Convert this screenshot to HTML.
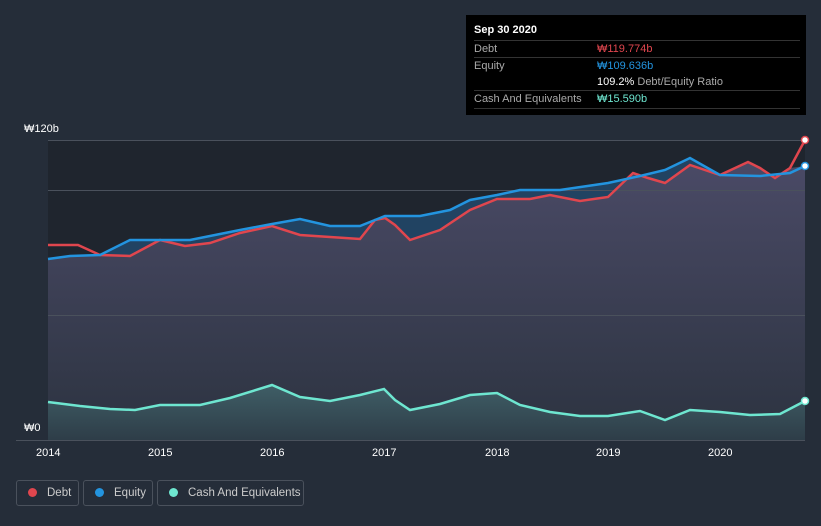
<!DOCTYPE html>
<html><head><style>
html,body{margin:0;width:821px;height:526px;overflow:hidden}
body{background:#252d39;font-family:"Liberation Sans","Noto Sans CJK KR",sans-serif;position:relative}
.t{position:absolute;color:#fff;font-size:11px}
.tip{position:absolute;left:466px;top:15px;width:340px;height:100px;background:#000;}
.row{position:absolute;left:8px;width:326px;border-top:1px solid #333;font-size:11px;color:#aaa;height:17px;line-height:17px}
.leg{position:absolute;top:480px;height:26px;border:1px solid #4a515c;border-radius:3px;color:#ccc;font-size:11.5px;line-height:25px;box-sizing:border-box;white-space:nowrap}
.dot{display:inline-block;width:9px;height:9px;border-radius:50%;margin:0 10px 0 11px;vertical-align:-1px}
</style></head><body>
<svg width="821" height="526" style="position:absolute;left:0;top:0">
<defs><linearGradient id="g" x1="0" y1="0" x2="0" y2="1"><stop offset="0" stop-color="#4a4a66"/><stop offset="1" stop-color="#2c3340"/></linearGradient>
<linearGradient id="c" x1="0" y1="0" x2="0" y2="1"><stop offset="0" stop-color="#3f5e66"/><stop offset="1" stop-color="#2e3d48"/></linearGradient></defs>
<rect x="48" y="140" width="757" height="300" fill="#1f252e"/>
<polygon fill="#214362" points="48,259 70,256 100,255 130,240 190,240 240,230 272,224 300,219 330,226 360,226 385,216 420,216 450,210 470,200 497,195 520,190 560,190 608,183 640,176 665,170 690,158 720,175 760,176 790,173 805,166 805,440 48,440"/>
<polygon fill="url(#g)" points="48,259 70,256 100,255 130,256 160,240 185,246 210,243 240,233 272,226 300,235 330,237 360,239 375,220 385,218 395,225 410,240 440,230 470,210 497,199 530,199 550,195 580,201 608,197 633,173 648,178 665,183 690,165 720,175 748,162 760,168 775,178 790,168 805,166 805,440 48,440"/>
<polygon fill="url(#c)" points="48,402 80,406 110,409 135,410 160,405 200,405 230,398 272,385 300,397 330,401 360,395 384,389 395,400 410,410 440,404 470,395 497,393 520,405 550,412 580,416 608,416 640,411 665,420 690,410 720,412 750,415 780,414 805,401 805,440 48,440"/>
<g stroke="#4a515c" stroke-width="1"><line x1="48" y1="140.5" x2="805" y2="140.5"/><line x1="48" y1="190.5" x2="805" y2="190.5"/><line x1="48" y1="315.5" x2="805" y2="315.5"/><line x1="16" y1="440.5" x2="805" y2="440.5"/></g>
<polyline fill="none" stroke="#e0464e" stroke-width="2.5" points="48,245 78,245 100,255 130,256 160,240 185,246 210,243 240,233 272,226 300,235 330,237 360,239 375,220 385,218 395,225 410,240 440,230 470,210 497,199 530,199 550,195 580,201 608,197 633,173 648,178 665,183 690,165 720,175 748,162 760,168 775,178 790,168 805,140"/>
<polyline fill="none" stroke="#2394df" stroke-width="2.5" points="48,259 70,256 100,255 130,240 190,240 240,230 272,224 300,219 330,226 360,226 385,216 420,216 450,210 470,200 497,195 520,190 560,190 608,183 640,176 665,170 690,158 720,175 760,176 790,173 805,166"/>
<polyline fill="none" stroke="#6ee6d0" stroke-width="2.5" points="48,402 80,406 110,409 135,410 160,405 200,405 230,398 272,385 300,397 330,401 360,395 384,389 395,400 410,410 440,404 470,395 497,393 520,405 550,412 580,416 608,416 640,411 665,420 690,410 720,412 750,415 780,414 805,401"/>
<circle cx="805" cy="140" r="3.5" fill="#fff" stroke="#e0464e" stroke-width="1.5"/>
<circle cx="805" cy="166" r="3.5" fill="#fff" stroke="#2394df" stroke-width="1.5"/>
<circle cx="805" cy="401" r="3.5" fill="#fff" stroke="#6ee6d0" stroke-width="1.5"/>
</svg>
<div class="t" style="left:24px;top:123px">₩120b</div>
<div class="t" style="left:24px;top:422px">₩0</div>
<div class="t" style="left:36px;top:447px">2014</div><div class="t" style="left:148px;top:447px">2015</div><div class="t" style="left:260px;top:447px">2016</div><div class="t" style="left:372px;top:447px">2017</div><div class="t" style="left:485px;top:447px">2018</div><div class="t" style="left:596px;top:447px">2019</div><div class="t" style="left:708px;top:447px">2020</div>
<div class="tip">
<div style="position:absolute;left:8px;top:9px;color:#fff;font-weight:bold;font-size:11px">Sep 30 2020</div>
<div class="row" style="top:25px">Debt<span style="position:absolute;left:123px;color:#e0464e">₩119.774b</span></div>
<div class="row" style="top:42px">Equity<span style="position:absolute;left:123px;color:#2394df">₩109.636b</span></div>
<div class="row" style="top:59px;border-top:none"><span style="position:absolute;left:123px;color:#fff">109.2% <span style="color:#aaa">Debt/Equity Ratio</span></span></div>
<div class="row" style="top:75px;border-bottom:1px solid #333">Cash And Equivalents<span style="position:absolute;left:123px;color:#6ee6d0">₩15.590b</span></div>
</div>
<div class="leg" style="left:16px;width:63px"><span class="dot" style="background:#e0464e"></span>Debt</div>
<div class="leg" style="left:83px;width:70px"><span class="dot" style="background:#2394df"></span>Equity</div>
<div class="leg" style="left:157px;width:147px"><span class="dot" style="background:#6ee6d0"></span>Cash And Equivalents</div>
</body></html>
